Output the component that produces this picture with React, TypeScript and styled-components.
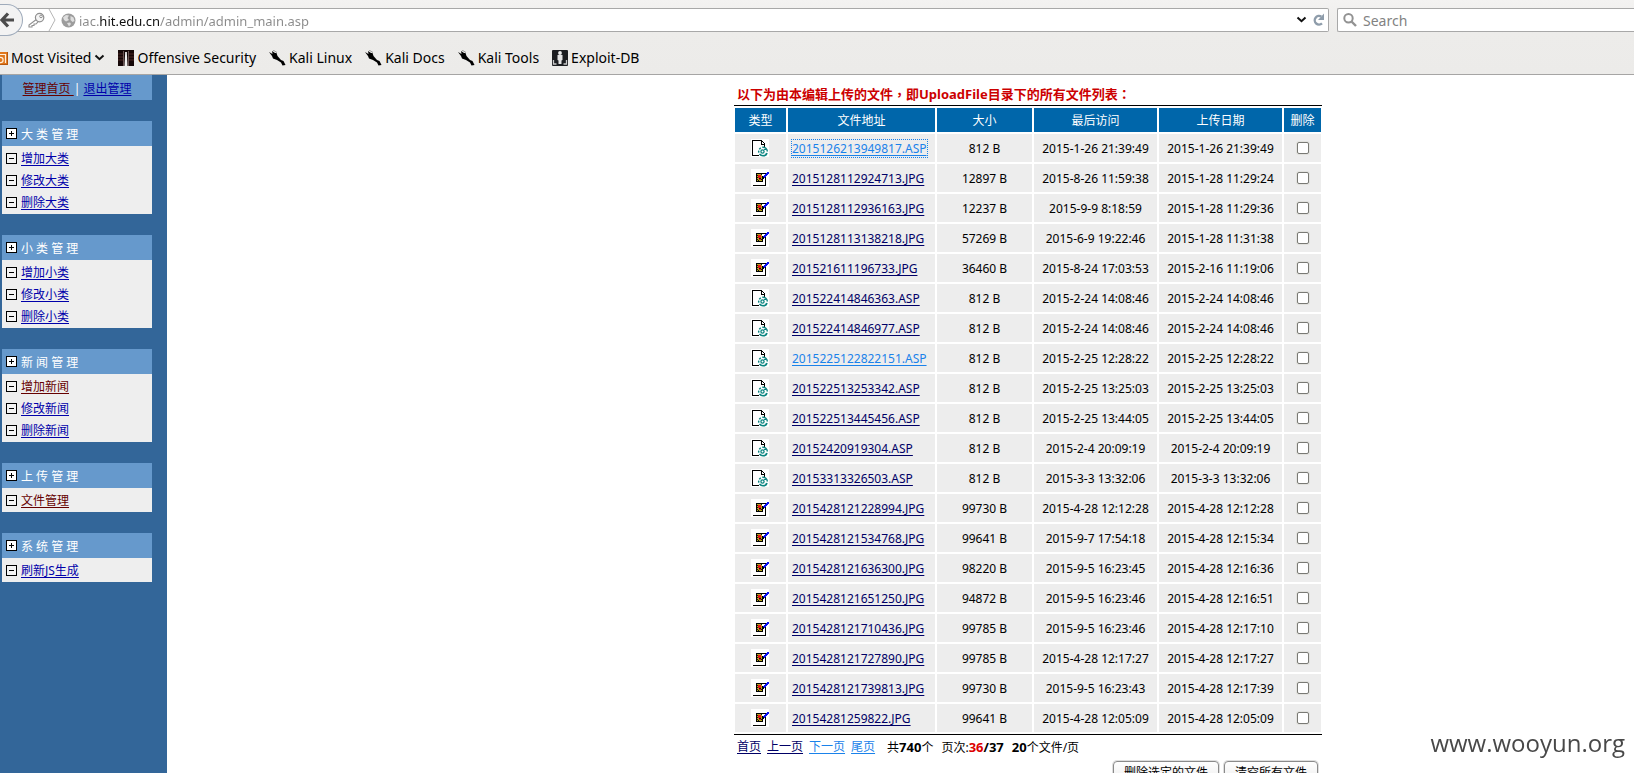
import React from 'react';
import styled, { createGlobalStyle, css } from 'styled-components';

const SANS = '"Noto Sans", "Noto Sans CJK SC", sans-serif';

const GlobalStyle = createGlobalStyle`
  *, *::before, *::after { box-sizing: border-box; }
  html, body { margin: 0; padding: 0; background: #fff; }
  body { font-family: ${SANS}; font-size: 12px; color: #000; overflow: hidden; }
  button, input { font-family: inherit; }
`;

const Window = styled.div`
  display: flex;
  flex-direction: column;
  height: 100vh;
  overflow: hidden;
`;

/* ---------- browser chrome ---------- */

const Chrome = styled.header`
  flex: none;
  border-bottom: 1px solid #a6a5a4;
  background: linear-gradient(#f3f2f1 0, #edecea 32px, #ecebe9 100%);
`;

const AddressRow = styled.div`
  display: flex;
  align-items: center;
  height: 40px;
  gap: 8px;
`;

const fieldBox = css`
  display: flex;
  align-items: center;
  height: 24px;
  border: 1px solid #a8a8a8;
  background: #fff;
`;

const AddressBar = styled.div`
  ${fieldBox}
  flex: 1;
  min-width: 0;
  border-left: 0;
  border-radius: 0 2px 2px 0;
`;

const SearchBar = styled.label`
  ${fieldBox}
  width: 297px;
  border-right: 0;
  border-radius: 2px 0 0 2px;
  padding-left: 5px;
  gap: 6px;
`;

const BackButton = styled.button`
  flex: none;
  display: flex;
  align-items: center;
  justify-content: flex-end;
  width: 23px;
  height: 32px;
  padding: 0 8px 0 0;
  border: 1px solid #9fabbb;
  border-left: 0;
  border-radius: 0 16px 16px 0;
  background: #f3f3f3;
`;

const IconButton = styled.button`
  display: flex;
  padding: 0;
  border: 0;
  background: none;
`;

const Identity = styled.div`
  display: flex;
  align-items: center;
  gap: 3px;
  padding: 0 3px 0 5px;
`;

const SiteIcon = styled.div`
  display: flex;
  padding: 0 3px 0 2px;
`;

const AddressInput = styled.input`
  flex: 1;
  min-width: 0;
  padding: 2px 0 0;
  border: 0;
  outline: 0;
  font-size: 13px;
  line-height: 20px;
  color: transparent;
  background: linear-gradient(90deg, #8a8a8a 20px, #111 20px, #111 80px, #8a8a8a 80px);
  background-clip: text;
  -webkit-background-clip: text;
`;

const SearchInput = styled.input`
  flex: 1;
  min-width: 0;
  padding: 2px 0 0;
  border: 0;
  outline: 0;
  background: none;
  font-size: 14px;
  line-height: 20px;
  &::placeholder { color: #828282; opacity: 1; }
`;

const Bookmarks = styled.nav`
  display: flex;
  align-items: center;
  height: 34px;
  gap: 13px;
  padding-top: 2px;
`;

const Bookmark = styled.a`
  display: flex;
  align-items: center;
  gap: 3px;
  font-size: 14px;
  line-height: 20px;
  color: #000;
  text-decoration: none;
  white-space: nowrap;
  svg { flex: none; }
`;

/* ---------- page frames ---------- */

const Frames = styled.div`
  flex: 1;
  display: flex;
  min-height: 0;
`;

const Sidebar = styled.aside`
  flex: none;
  width: 167px;
  padding: 0 15px 0 2px;
  background: #336699;
`;

const SideTop = styled.div`
  height: 25px;
  line-height: 28px;
  text-align: center;
  background: #6699cc;
  color: #fff;
  white-space: pre;
`;

const Group = styled.section`
  margin-top: 21px;
`;

const GroupTitle = styled.h2`
  display: flex;
  align-items: center;
  gap: 4px;
  height: 25px;
  margin: 0;
  padding-left: 4px;
  background: #6699cc;
  color: #fff;
  font-size: 12px;
  font-weight: 400;
`;

const GroupList = styled.ul`
  margin: 0;
  padding: 1px 0 1px 4px;
  list-style: none;
  background: #eee;
`;

const GroupItem = styled.li`
  display: flex;
  align-items: center;
  gap: 4px;
  height: 22px;
`;

const linkColors = { fresh: '#0000aa', seen: '#660000', read: '#000066', active: '#1a82ea' };
type LinkTone = keyof typeof linkColors;

const TextLink = styled.a<{ $tone: LinkTone; $focused?: boolean }>`
  color: ${p => linkColors[p.$tone]};
  text-decoration: underline;
  text-underline-offset: 2px;
  outline: ${p => (p.$focused ? '1px dotted #1a82ea' : 'none')};
`;

const Main = styled.main`
  flex: 1;
  display: flex;
  flex-direction: column;
  align-items: center;
  min-width: 0;
  padding: 10px 0 0 255px;
  overflow: hidden;
`;

const Panel = styled.form`
  width: 588px;
`;

const Notice = styled.p`
  margin: 0;
  padding: 0 0 2px 3px;
  font-size: 13px;
  line-height: 18px;
  font-weight: 700;
  color: #cc0000;
`;

const CentredMark = styled.span`
  font-family: "Noto Sans CJK TC", sans-serif;
`;

const TableFrame = styled.div`
  border: solid #000;
  border-width: 1px 0;
`;

const FileTable = styled.table`
  width: 590px;
  margin: 0 -1px;
  table-layout: fixed;
  border-collapse: separate;
  border-spacing: 2px;
  line-height: 16px;
`;

const HeadCell = styled.th`
  height: 24px;
  padding: 2px 0 0;
  background: #0066aa;
  color: #fff;
  font-weight: 400;
`;

type CellKind = 'text' | 'link' | 'mark';

const Cell = styled.td<{ $kind?: CellKind }>`
  height: 28px;
  padding: ${p => (p.$kind === 'mark' ? '0' : p.$kind === 'link' ? '2px 0 0 4px' : '2px 0 0')};
  background: #ededed;
  text-align: ${p => (p.$kind === 'link' ? 'left' : 'center')};
  white-space: nowrap;
  svg { display: block; margin-left: 16px; }
`;

const Check = styled.input`
  appearance: none;
  display: block;
  width: 12px;
  height: 12px;
  margin: 0 auto;
  border: 1px solid #7a7a75;
  border-radius: 2px;
  background: #fff;
  box-shadow: 0 0 0 1px #e2e2de;
`;

const Pager = styled.div`
  display: flex;
  gap: 6px;
  height: 25px;
  padding-left: 3px;
  line-height: 24px;
  b { font-size: 13px; }
`;

const Counts = styled.div`
  display: flex;
  gap: 8px;
  margin-left: 6px;
`;

const Current = styled.b`
  color: #dd0000;
`;

const Actions = styled.div`
  display: flex;
  justify-content: flex-end;
  gap: 5px;
  padding: 1px 4px 0 0;
`;

const ActionButton = styled.button`
  height: 24px;
  padding: 0 10px;
  border: 1px solid #8a8a8a;
  border-radius: 4px;
  background: linear-gradient(#fefefe, #ececec);
  box-shadow: 0 0 0 1px #dedede;
  font-size: 12px;
  line-height: 20px;
  color: #000;
`;

const Watermark = styled.div`
  position: fixed;
  right: 9px;
  bottom: 12px;
  font-family: "Open Sans", sans-serif;
  font-size: 24px;
  line-height: 36px;
  color: #484848;
`;

/* ---------- drawings ---------- */

const BackArrow = () => (
  <svg width="14" height="16" viewBox="0 0 14 16">
    <path d="M8 1.5 2 8l6 6.5M2.5 8H14" fill="none" stroke="#4c4c4c" strokeWidth="3.2" />
  </svg>
);

const KeyIcon = () => (
  <svg width="17" height="16" viewBox="0 0 17 16">
    <path d="M8.3 7.5 1 13v2h3v-1.5h2V12h2l2-2.2" fill="#fff" stroke="#8f8f8f" strokeWidth="1.1" />
    <circle cx="11.6" cy="5.6" r="4.2" fill="#f4f4f4" stroke="#8f8f8f" strokeWidth="1.2" />
    <circle cx="13" cy="4.4" r="1.3" fill="#fff" stroke="#8f8f8f" />
  </svg>
);

const Separator = () => (
  <svg width="8" height="22" viewBox="0 0 8 22">
    <path d="M1 0 7 11 1 22" fill="none" stroke="#b5b5b5" />
  </svg>
);

const GlobeIcon = () => (
  <svg width="15" height="15" viewBox="0 0 15 15">
    <circle cx="7.5" cy="7.5" r="7" fill="#9c9c9c" />
    <path d="M2 4.5 5 2l3 .5L6.5 5 8 7 5 8.5 3 7zM9.5 3l3 1.5 1 3.5-2 1L9.5 7zM6 10l3-.5 1 1.5-2 2.5z" fill="#dedede" />
  </svg>
);

const Chevron = () => (
  <svg width="11" height="16" viewBox="0 0 11 16">
    <path d="M1.5 5.5 5.5 9.2l4-3.7" fill="none" stroke="#111" strokeWidth="2" />
  </svg>
);

const ReloadIcon = () => (
  <svg width="13" height="16" viewBox="0 0 13 16">
    <path d="M9.3 4.6A4.3 4.3 0 1 0 10 11.4" fill="none" stroke="#8e9caa" strokeWidth="2.4" />
    <path d="M12 1.5V8H6z" fill="#8e9caa" />
  </svg>
);

const SearchIcon = () => (
  <svg width="14" height="16" viewBox="0 0 14 16">
    <circle cx="5.5" cy="6.3" r="4.2" fill="none" stroke="#929292" strokeWidth="2" />
    <path d="m8.5 9.5 4.500 4.500" stroke="#929292" strokeWidth="2.4" />
  </svg>
);

const FeedIcon = () => (
  <svg width="8" height="16" viewBox="8 0 8 16">
    <rect x="0" y="2" width="16" height="13" fill="#e0771c" />
    <path d="M6 4.5h7.5V13" fill="none" stroke="#fff0dc" strokeWidth="1.200" />
    <circle cx="8.500" cy="10" r="2.600" fill="none" stroke="#fff0dc" strokeWidth="1.200" />
    <path d="M15.5 2v13M8 14.500h8" stroke="#b8570b" />
  </svg>
);

const OffsecIcon = () => (
  <svg width="16" height="16" viewBox="0 0 16 16">
    <rect width="16" height="16" fill="#160808" />
    <path d="M0 4h5M0 7h5M0 10h5M11 4h5M11 7h5M11 10h5" stroke="#4b2423" />
    <path d="M5.5 1v15M10.5 1v15" stroke="#6b5654" />
    <path d="M7.200 2h1.600l.7 14h-3z" fill="#f2f0ef" />
  </svg>
);

const KaliIcon = () => (
  <svg width="17" height="16" viewBox="0 0 17 16">
    <path d="M0 2 3.5 4 3 1l3 2 1.500 0 1 3 3.500 4 2.500 1 2 4-3 .5-1.500-3L8 10 4 8.500 3 6z" fill="#000" />
    <path d="m4 0 4 2.500" stroke="#999" />
  </svg>
);

const ExploitIcon = () => (
  <svg width="16" height="16" viewBox="0 0 16 16">
    <rect width="16" height="16" rx="1" fill="#1c1d20" />
    <circle cx="8" cy="3" r="1.9" fill="#eee" />
    <path d="M5.5 5h5v5l-1 .5V14h-3v-3.500l-1-.5z" fill="#e4e4e4" />
    <path d="M1.500 10v4h3M14.500 10v4h-3" fill="none" stroke="#c8c8c8" strokeWidth="1.300" />
  </svg>
);

const TreeIcon = ({ plus }: { plus?: boolean }) => (
  <svg width="11" height="11" viewBox="0 0 11 11" shapeRendering="crispEdges">
    <rect x=".5" y=".5" width="10" height="10" fill={plus ? '#fff' : '#f4f4f4'} stroke="#000" />
    <path d={plus ? 'M3 5.500h5M5.500 3v5' : 'M3 5.500h5'} stroke="#000" />
  </svg>
);

const ScriptFileIcon = () => (
  <svg width="18" height="18" viewBox="0 0 18 18">
    <rect width="18" height="18" fill="#fff" />
    <path
      d="M8 16.500H1.500v-15H10M10.500 1v4H14M11 2.500h1M12 3.500h1M13.500 4v4"
      fill="none"
      stroke="#000"
      shapeRendering="crispEdges"
    />
    <circle cx="12" cy="12.500" r="4.300" fill="none" stroke="#0b8480" strokeWidth="1.500" strokeDasharray="9 1.500 2 1.500 2 1.500" strokeDashoffset="16" />
    <circle cx="11.500" cy="12.500" r="1.600" fill="none" stroke="#0b8480" strokeWidth="1.300" />
    <path d="M13 10.500h2M15 14.500v2" stroke="#0b8480" />
  </svg>
);

const ImageFileIcon = () => (
  <svg width="18" height="18" viewBox="0 0 18 18" shapeRendering="crispEdges">
    <rect width="18" height="18" fill="#fff" />
    <path d="M2 16.500h13M14.500 8v9M5 4.500h7M5.500 4v9M5 12.500h7M11.500 7v6M12 4.500h3" stroke="#000" />
    <rect x="6" y="5" width="5" height="7" fill="#b8a51c" />
    <path d="M7 6h3v3H7zM8 10h2v1H8z" fill="#e81414" />
    <path d="M6 6.500h1M6 8.500h1M6 10.500h1M8 9.500h2M10 5.500h1M7 11.500h1M10 10.500h1" stroke="#111" />
    <path d="M16 3h2v2h-1v1h-1v1h-1v1h-1v1h-2V7h1V6h1V5h1V4h1z" fill="#0a10f0" />
    <path d="M11 8h2v2h-2z" fill="#000" />
  </svg>
);

/* ---------- data ---------- */

interface MenuGroup { title: string; items: { label: string; tone?: LinkTone }[] }

const menu: MenuGroup[] = [
  { title: '大 类 管 理', items: [{ label: '增加大类' }, { label: '修改大类' }, { label: '删除大类' }] },
  { title: '小 类 管 理', items: [{ label: '增加小类' }, { label: '修改小类' }, { label: '删除小类' }] },
  { title: '新 闻 管 理', items: [{ label: '增加新闻', tone: 'seen' }, { label: '修改新闻' }, { label: '删除新闻' }] },
  { title: '上 传 管 理', items: [{ label: '文件管理', tone: 'seen' }] },
  { title: '系 统 管 理', items: [{ label: '刷新JS生成' }] },
];

const files: [string, number, string, string, LinkTone?][] = [
  ['2015126213949817.ASP', 812, '2015-1-26 21:39:49', '2015-1-26 21:39:49', 'active'],
  ['2015128112924713.JPG', 12897, '2015-8-26 11:59:38', '2015-1-28 11:29:24'],
  ['2015128112936163.JPG', 12237, '2015-9-9 8:18:59', '2015-1-28 11:29:36'],
  ['2015128113138218.JPG', 57269, '2015-6-9 19:22:46', '2015-1-28 11:31:38'],
  ['201521611196733.JPG', 36460, '2015-8-24 17:03:53', '2015-2-16 11:19:06'],
  ['201522414846363.ASP', 812, '2015-2-24 14:08:46', '2015-2-24 14:08:46'],
  ['201522414846977.ASP', 812, '2015-2-24 14:08:46', '2015-2-24 14:08:46'],
  ['2015225122822151.ASP', 812, '2015-2-25 12:28:22', '2015-2-25 12:28:22', 'active'],
  ['201522513253342.ASP', 812, '2015-2-25 13:25:03', '2015-2-25 13:25:03'],
  ['201522513445456.ASP', 812, '2015-2-25 13:44:05', '2015-2-25 13:44:05'],
  ['20152420919304.ASP', 812, '2015-2-4 20:09:19', '2015-2-4 20:09:19'],
  ['20153313326503.ASP', 812, '2015-3-3 13:32:06', '2015-3-3 13:32:06'],
  ['2015428121228994.JPG', 99730, '2015-4-28 12:12:28', '2015-4-28 12:12:28'],
  ['2015428121534768.JPG', 99641, '2015-9-7 17:54:18', '2015-4-28 12:15:34'],
  ['2015428121636300.JPG', 98220, '2015-9-5 16:23:45', '2015-4-28 12:16:36'],
  ['2015428121651250.JPG', 94872, '2015-9-5 16:23:46', '2015-4-28 12:16:51'],
  ['2015428121710436.JPG', 99785, '2015-9-5 16:23:46', '2015-4-28 12:17:10'],
  ['2015428121727890.JPG', 99785, '2015-4-28 12:17:27', '2015-4-28 12:17:27'],
  ['2015428121739813.JPG', 99730, '2015-9-5 16:23:43', '2015-4-28 12:17:39'],
  ['20154281259822.JPG', 99641, '2015-4-28 12:05:09', '2015-4-28 12:05:09'],
];

const columns: [string, number][] = [
  ['类型', 51], ['文件地址', 147], ['大小', 95], ['最后访问', 123], ['上传日期', 123], ['删除', 37],
];

export default function App() {
  return (
    <Window>
      <GlobalStyle />
      <Chrome>
        <AddressRow>
          <AddressBar>
            <BackButton type="button" aria-label="Back"><BackArrow /></BackButton>
            <Identity>
              <KeyIcon />
              <Separator />
            </Identity>
            <SiteIcon><GlobeIcon /></SiteIcon>
            <AddressInput aria-label="Address" defaultValue="iac.hit.edu.cn/admin/admin_main.asp" />
            <IconButton type="button" aria-label="Show history"><Chevron /></IconButton>
            <Identity>
              <IconButton type="button" aria-label="Reload"><ReloadIcon /></IconButton>
            </Identity>
          </AddressBar>
          <SearchBar>
            <SearchIcon />
            <SearchInput aria-label="Search" placeholder="Search" />
          </SearchBar>
        </AddressRow>
        <Bookmarks>
          <Bookmark href="#visited"><FeedIcon />Most Visited<Chevron /></Bookmark>
          <Bookmark href="#offsec"><OffsecIcon />Offensive Security</Bookmark>
          <Bookmark href="#kali"><KaliIcon />Kali Linux</Bookmark>
          <Bookmark href="#docs"><KaliIcon />Kali Docs</Bookmark>
          <Bookmark href="#tools"><KaliIcon />Kali Tools</Bookmark>
          <Bookmark href="#exploit"><ExploitIcon />Exploit-DB</Bookmark>
        </Bookmarks>
      </Chrome>
      <Frames>
        <Sidebar>
          <SideTop>
            <TextLink href="#home" $tone="seen">{'管理首页 '}</TextLink>
            {'| '}
            <TextLink href="#logout" $tone="fresh">退出管理</TextLink>
          </SideTop>
          {menu.map(group => (
            <Group key={group.title}>
              <GroupTitle><TreeIcon plus />{group.title}</GroupTitle>
              <GroupList>
                {group.items.map(item => (
                  <GroupItem key={item.label}>
                    <TreeIcon />
                    <TextLink href="#menu" $tone={item.tone ?? 'fresh'}>{item.label}</TextLink>
                  </GroupItem>
                ))}
              </GroupList>
            </Group>
          ))}
        </Sidebar>
        <Main>
          <Panel>
            <Notice>
              以下为由本编辑上传的文件<CentredMark>，</CentredMark>即UploadFile目录下的所有文件列表<CentredMark>：</CentredMark>
            </Notice>
            <TableFrame>
              <FileTable>
                <colgroup>
                  {columns.map(([label, width]) => <col key={label} width={width} />)}
                </colgroup>
                <thead>
                  <tr>{columns.map(([label]) => <HeadCell key={label} scope="col">{label}</HeadCell>)}</tr>
                </thead>
                <tbody>
                  {files.map(([name, size, visited, uploaded, tone], i) => (
                    <tr key={name}>
                      <Cell $kind="mark">{name.endsWith('ASP') ? <ScriptFileIcon /> : <ImageFileIcon />}</Cell>
                      <Cell $kind="link">
                        <TextLink href="#file" $tone={tone ?? 'read'} $focused={i === 0}>{name}</TextLink>
                      </Cell>
                      <Cell>{size} B</Cell>
                      <Cell>{visited}</Cell>
                      <Cell>{uploaded}</Cell>
                      <Cell $kind="mark"><Check type="checkbox" aria-label={`删除 ${name}`} /></Cell>
                    </tr>
                  ))}
                </tbody>
              </FileTable>
            </TableFrame>
            <Pager>
              <TextLink href="#first" $tone="read">首页</TextLink>
              <TextLink href="#prev" $tone="read">上一页</TextLink>
              <TextLink href="#next" $tone="active">下一页</TextLink>
              <TextLink href="#last" $tone="active">尾页</TextLink>
              <Counts>
                <span>共<b>740</b>个</span>
                <span>页次:<Current>36</Current><b>/37</b></span>
                <span><b>20</b>个文件/页</span>
              </Counts>
            </Pager>
            <Actions>
              <ActionButton type="button">删除选定的文件</ActionButton>
              <ActionButton type="button">清空所有文件</ActionButton>
            </Actions>
          </Panel>
        </Main>
      </Frames>
      <Watermark>www.wooyun.org</Watermark>
    </Window>
  );
}
